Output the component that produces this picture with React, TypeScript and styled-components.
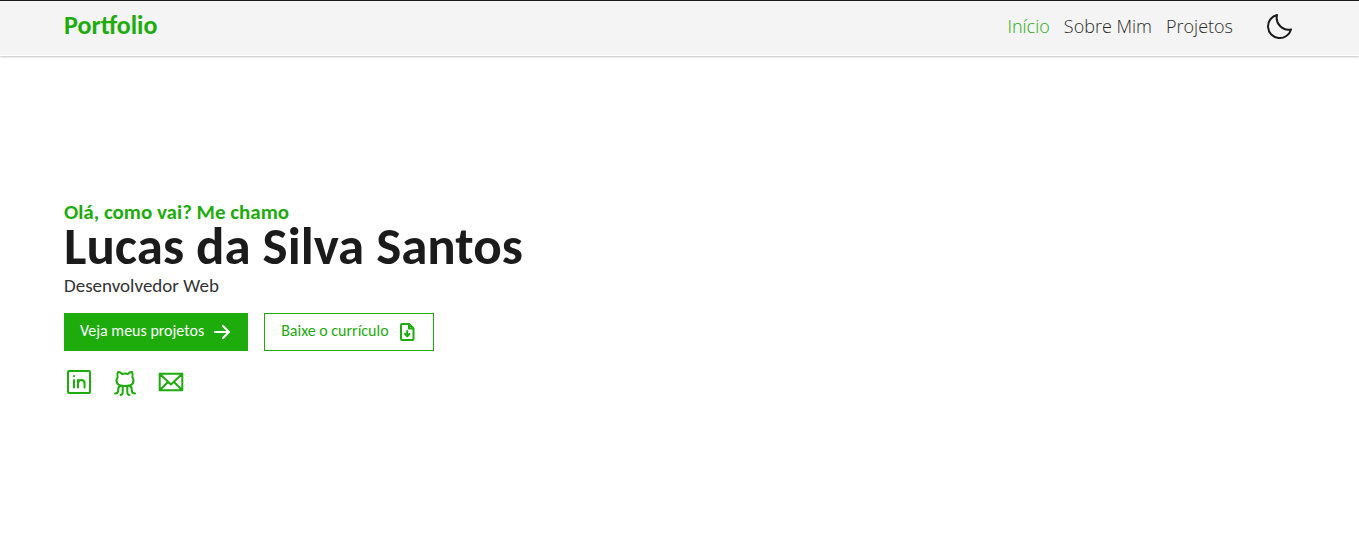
import React from "react";
import styled, { createGlobalStyle } from "styled-components";

const GlobalStyle = createGlobalStyle`
  * { box-sizing: border-box; margin: 0; padding: 0; }
  body { background: #ffffff; color: #1b1b1b; font-family: Carlito, Lato, sans-serif; }
  a { text-decoration: none; color: inherit; }
`;

const green = "#1dac0c";

const Page = styled.div`
  min-height: 100vh;
  display: flex;
  flex-direction: column;
`;

const Header = styled.header`
  display: flex;
  align-items: center;
  justify-content: space-between;
  height: 56px;
  padding: 0 64px 2px;
  background: #f4f4f4;
  border-top: 1px solid #1b1b1b;
  border-bottom: 1px solid #ffffff;
  box-shadow: 0 1px 2px rgba(0, 0, 0, 0.25);
`;

const Brand = styled.a`
  color: ${green};
  font-size: 26px;
  font-weight: 700;
  line-height: 32px;
  padding-bottom: 4px;
`;

const Nav = styled.nav`
  display: flex;
  align-items: center;
  gap: 14px;
`;

const NavLink = styled.a<{ $active?: boolean }>`
  font-family: "Open Sans", sans-serif;
  font-size: 18px;
  font-weight: 300;
  line-height: 24px;
  padding-bottom: 2px;
  color: ${(p) => (p.$active ? green : "#2a2a2a")};
`;

const ThemeButton = styled.button`
  display: flex;
  margin-left: 16px;
  border: 0;
  background: none;
  color: #1b1b1b;
  cursor: pointer;
`;

const Hero = styled.main`
  flex: 1;
  display: flex;
  flex-direction: column;
  justify-content: center;
  align-items: flex-start;
  padding: 0 64px 4px;
`;

const Greeting = styled.p`
  color: ${green};
  font-size: 21px;
  font-weight: 700;
  line-height: 22px;
`;

const Name = styled.h1`
  font-size: 53px;
  font-weight: 700;
  line-height: 46px;
`;

const Role = styled.p`
  font-size: 19px;
  line-height: 34px;
  color: #333333;
`;

const Actions = styled.div`
  display: flex;
  gap: 16px;
  margin-top: 10px;
`;

const Action = styled.a<{ $filled?: boolean }>`
  display: flex;
  align-items: center;
  gap: 8px;
  height: 38px;
  padding: 0 16px;
  border: ${(p) => (p.$filled ? "0" : `1px solid ${green}`)};
  background: ${(p) => (p.$filled ? green : "transparent")};
  color: ${(p) => (p.$filled ? "#ffffff" : green)};
  font-size: 16px;
`;

const ActionLabel = styled.span`
  padding-bottom: 3px;
`;

const Socials = styled.div`
  display: flex;
  gap: 16px;
  margin-top: 16px;
  color: ${green};
`;

const SocialLink = styled.a`
  display: flex;
`;

type IconProps = { size: number; children: React.ReactNode };

const Icon = ({ size, children }: IconProps) => (
  <svg width={size} height={size} viewBox={`0 0 ${size} ${size}`} fill="none" stroke="currentColor"
    strokeWidth={2} strokeLinecap="round" strokeLinejoin="round" aria-hidden="true">
    {children}
  </svg>
);

export default function App() {
  return (
    <Page>
      <GlobalStyle />
      <Header>
        <Brand href="#">Portfolio</Brand>
        <Nav>
          <NavLink href="#" $active>Início</NavLink>
          <NavLink href="#sobre">Sobre Mim</NavLink>
          <NavLink href="#projetos">Projetos</NavLink>
          <ThemeButton type="button" aria-label="Alternar tema">
            <Icon size={32}>
              <path d="M14 4A11.7 11.7 0 1 0 28 18.5A12 12 0 0 1 14 4Z" />
            </Icon>
          </ThemeButton>
        </Nav>
      </Header>
      <Hero>
        <Greeting>Olá, como vai? Me chamo</Greeting>
        <Name>Lucas da Silva Santos</Name>
        <Role>Desenvolvedor Web</Role>
        <Actions>
          <Action href="#projetos" $filled>
            <ActionLabel>Veja meus projetos</ActionLabel>
            <Icon size={20}><path d="M3 10H17M11 4L17 10L11 16" /></Icon>
          </Action>
          <Action href="#curriculo">
            <ActionLabel>Baixe o currículo</ActionLabel>
            <Icon size={20}>
              <path d="M5 2H12L16.5 6.5V17Q16.5 18 15.5 18H5Q4 18 4 17V3Q4 2 5 2ZM12 2V6.5H16.5" />
              <path d="M10.2 9V14M8 12L10.2 14.2L12.4 12" />
            </Icon>
          </Action>
        </Actions>
        <Socials>
          <SocialLink href="#linkedin" aria-label="LinkedIn">
            <Icon size={30}>
              <rect x="4" y="4" width="22" height="22" rx="1" />
              <path d="M10 13V20.5M14 13V20.5M14 16.5Q14 13 17.3 13T20.6 16.5V20.5M10 9V9.2" />
            </Icon>
          </SocialLink>
          <SocialLink href="#github" aria-label="GitHub">
            <Icon size={30}>
              <path d="M8 5Q10.5 4.5 12 7Q15 6.2 18 7Q19.5 4.5 22 5Q23.2 7.5 22.3 10Q24.5 13 22.8 16.5Q20.5 19 15 19T7.2 16.5Q5.500 13 7.700 10Q6.800 7.500 8 5Z" />
              <path d="M10.5 19Q8 20 8.2 23Q8.2 26.5 5 26.5M12.7 19.5V25Q12.7 28 10.5 28" />
              <path d="M19.5 19Q22 20 21.8 23Q21.8 26.5 25 26.5M17.3 19.5V25Q17.3 28 19.5 28" />
            </Icon>
          </SocialLink>
          <SocialLink href="#email" aria-label="E-mail">
            <Icon size={30}>
              <path d="M3.7 6.7H26.3V23.3H3.7ZM3.7 6.7L15 17.5L26.3 6.7M3.7 23.3L12 15M26.3 23.3L18 15" />
            </Icon>
          </SocialLink>
        </Socials>
      </Hero>
    </Page>
  );
}
